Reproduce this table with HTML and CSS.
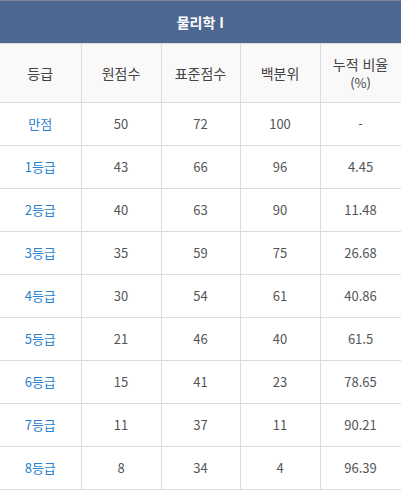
FILE: index.html
```html
<!DOCTYPE html>
<html lang="ko">
<head>
<meta charset="utf-8">
<link rel="stylesheet" href="styles.css">
</head>
<body>
<table class="grade-table">
  <colgroup>
    <col class="c1"><col class="c2"><col class="c3"><col class="c4"><col class="c5">
  </colgroup>
  <thead>
    <tr class="title-row"><th colspan="5">물리학 I</th></tr>
    <tr class="head-row">
      <th>등급</th><th>원점수</th><th>표준점수</th><th>백분위</th><th>누적 비율<br><span class="pct">(%)</span></th>
    </tr>
  </thead>
  <tbody>
    <tr><td class="grade">만점</td><td>50</td><td>72</td><td>100</td><td>-</td></tr>
    <tr><td class="grade">1등급</td><td>43</td><td>66</td><td>96</td><td>4.45</td></tr>
    <tr><td class="grade">2등급</td><td>40</td><td>63</td><td>90</td><td>11.48</td></tr>
    <tr><td class="grade">3등급</td><td>35</td><td>59</td><td>75</td><td>26.68</td></tr>
    <tr><td class="grade">4등급</td><td>30</td><td>54</td><td>61</td><td>40.86</td></tr>
    <tr><td class="grade">5등급</td><td>21</td><td>46</td><td>40</td><td>61.5</td></tr>
    <tr><td class="grade">6등급</td><td>15</td><td>41</td><td>23</td><td>78.65</td></tr>
    <tr><td class="grade">7등급</td><td>11</td><td>37</td><td>11</td><td>90.21</td></tr>
    <tr><td class="grade">8등급</td><td>8</td><td>34</td><td>4</td><td>96.39</td></tr>
  </tbody>
</table>
</body>
</html>
```
FILE: styles.css
```css
html, body {
  margin: 0;
  padding: 0;
  background: #fff;
}
.grade-table {
  width: 401px;
  border-collapse: collapse;
  table-layout: fixed;
  font-family: "Noto Sans CJK KR", "Noto Sans", sans-serif;
  font-size: 13px;
  color: #555;
  border-top: 1px solid #7b8595;
}
.c1 { width: 81px; }
.c2 { width: 80px; }
.c3 { width: 79px; }
.c4 { width: 80px; }
.c5 { width: 81px; }
.grade-table th,
.grade-table td {
  border: 1px solid #dcdcdc;
  text-align: center;
  padding: 0;
  font-weight: normal;
}
.grade-table tr > :first-child { border-left: none; }
.title-row th {
  background: #4d6890;
  color: #fff;
  font-weight: bold;
  font-size: 14px;
  height: 42px;
  border-color: #4d6890;
  border-bottom: 1px solid #dcdcdc;
  border-top: none;
}
.head-row th {
  background: #f9f9f9;
  color: #444;
  height: 58px;
  font-size: 14px;
  line-height: 18px;
}
.pct { font-size: 13px; }
.grade-table td {
  height: 42px;
  line-height: 16px;
}
.grade-table td.grade { color: #2c7fcf; }
```
